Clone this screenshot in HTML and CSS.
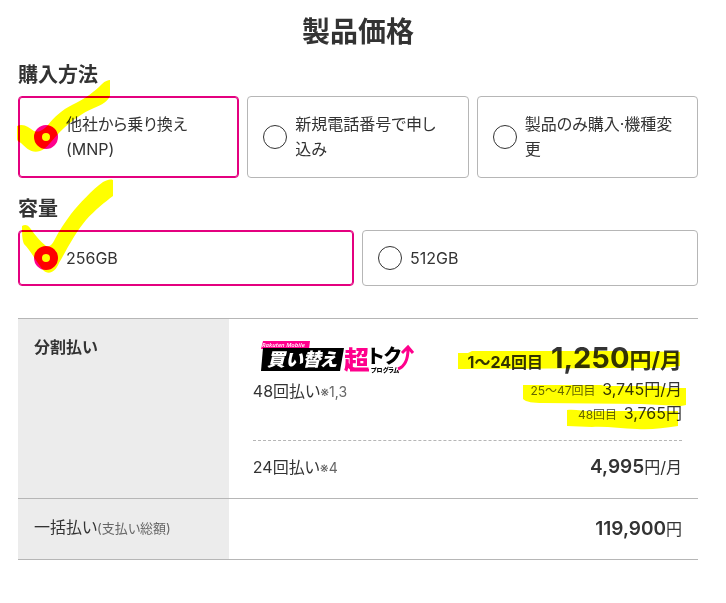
FILE: index.html
```html
<!DOCTYPE html>
<html lang="ja">
<head>
    <meta charset="UTF-8">
    <meta name="viewport" content="width=device-width, initial-scale=1.0">
    <title>製品価格</title>
    <link rel="stylesheet" href="styles.css">
</head>
<body>
    <main class="price">
        <h1 class="price-title">製品価格</h1>

        <h2 class="section-title" id="method-title">購入方法</h2>
        <div class="options options-method" role="radiogroup" aria-labelledby="method-title">
            <label class="option">
                <input type="radio" name="method" value="mnp" checked>
                <span>他社から乗り換え(MNP)</span>
                <svg class="marker marker-method" width="98" height="76" viewBox="0 0 98 76" aria-hidden="true">
                    <path d="M1 47C8 44 13 49 18 52C24 54 28 50 32 46C38 38 46 31 56 26C70 19 78 13 86 5C89 2 92 1 94 1V17C92 22 86 26 78 29C66 34 57 41 48 49C38 58 30 71 24 72C16 75 10 69 5 64C2 63 1 61 1 60Z"/>
                </svg>
            </label>
            <label class="option">
                <input type="radio" name="method" value="new">
                <span>新規電話番号で申し込み</span>
            </label>
            <label class="option">
                <input type="radio" name="method" value="device">
                <span>製品のみ購入·機種変更</span>
            </label>
        </div>

        <h2 class="section-title" id="storage-title">容量</h2>
        <div class="options options-storage" role="radiogroup" aria-labelledby="storage-title">
            <label class="option">
                <input type="radio" name="storage" value="256" checked>
                <span>256GB</span>
                <svg class="marker marker-storage" width="94" height="96" viewBox="0 0 94 96" aria-hidden="true">
                    <path d="M1 47C4 45 7 46 9 49C14 56 20 63 25 67C29 68 31 66 34 60C38 52 44 43 50 35C58 25 72 10 82 3C86 1 89 0 92 1V17C84 23 74 31 65 41C54 54 45 72 38 84C34 94 27 96 22 91C14 81 10 72 3 65C1 61 1 53 1 47Z"/>
                </svg>
            </label>
            <label class="option">
                <input type="radio" name="storage" value="512">
                <span>512GB</span>
            </label>
        </div>

        <table class="payment">
            <tr>
                <th scope="row"><strong>分割払い</strong></th>
                <td>
                    <div class="plan plan-48">
                        <div class="plan-name">
                            <svg class="program-logo" width="162" height="36" viewBox="0 0 162 36" role="img" aria-label="Rakuten Mobile 買い替え超トクプログラム">
                                <path class="logo-pink" d="M10 2H57L56 10H8Z"/>
                                <path d="M10 9H91L87 32H8Z"/>
                                <text class="logo-brand" x="9" y="8">Rakuten Mobile</text>
                                <text class="logo-main" x="14" y="27">買い替え</text>
                                <text class="logo-super" x="91" y="30">超</text>
                                <text class="logo-toku" x="115" y="24">トク</text>
                                <path class="logo-arrow" d="M97 31H116M145 30C153 27 155 18 155 10M149 14L155 8L160 14"/>
                                <text class="logo-program" x="118" y="33">プログラム</text>
                            </svg>
                            <div>48回払い<small>※1,3</small></div>
                        </div>
                        <div class="plan-price">
                            <div class="price-main">
                                <span>1〜24回目</span> <b>1,250</b><span class="unit">円/月</span>
                                <svg class="marker marker-first" width="222" height="20" viewBox="0 0 222 20" aria-hidden="true">
                                    <path d="M0 2L10 2L14 0H168L222 1V15C205 18 190 17 172 17L0 18Z"/>
                                </svg>
                            </div>
                            <div class="price-sub">
                                <small>25〜47回目</small> 3,745円/月
                                <svg class="marker marker-second" width="164" height="22" viewBox="0 0 164 22" aria-hidden="true">
                                    <path d="M0 0H78L82 1H138L142 3H163V20L158 21L118 19L20 18C10 18 3 17 0 14Z"/>
                                </svg>
                            </div>
                            <div class="price-sub">
                                <small>48回目</small> 3,765円
                                <svg class="marker marker-third" width="112" height="22" viewBox="0 0 112 22" aria-hidden="true">
                                    <path d="M0 1C10 0 18 3 30 2H111V17C96 19 84 21 70 20C54 20 40 17 25 18L0 17Z"/>
                                </svg>
                            </div>
                        </div>
                    </div>
                    <div class="plan plan-24">
                        <div>24回払い<small>※4</small></div>
                        <div><b>4,995</b>円/月</div>
                    </div>
                </td>
            </tr>
            <tr>
                <th scope="row">一括払い<small>(支払い総額)</small></th>
                <td class="total"><b>119,900</b>円</td>
            </tr>
        </table>
    </main>
</body>
</html>
```
FILE: styles.css
```css
* {
    box-sizing: border-box;
}
body {
    margin: 0;
    font-family: Inter, "Noto Sans CJK JP", sans-serif;
    font-size: 16px;
    line-height: 25px;
    font-feature-settings: "palt";
    color: #333;
    background-color: #fff;
}
.price {
    padding: 12px 28px 40px 18px;
}
.price-title {
    margin: 0 0 10px;
    font-size: 28px;
    line-height: 40px;
    text-align: center;
}
.section-title {
    margin: 0 0 8px;
    font-size: 20px;
    line-height: 26px;
}
.options {
    display: grid;
    gap: 8px;
}
.options-method {
    grid-template-columns: repeat(3, 1fr);
    margin-bottom: 18px;
}
.options-storage {
    grid-template-columns: repeat(2, 1fr);
    margin-bottom: 32px;
}
.option {
    position: relative;
    display: flex;
    align-items: center;
    gap: 8px;
    min-height: 56px;
    padding: 14px 20px 14px 15px;
    border: 1px solid #b6b6b6;
    border-radius: 4px;
    cursor: pointer;
}
.options-method .option {
    min-height: 82px;
}
.option:has(input:checked) {
    border-color: #e4007f;
    box-shadow: inset 0 0 0 1px #e4007f;
}
.option input {
    appearance: none;
    flex: none;
    width: 24px;
    height: 24px;
    margin: 0;
    border: 1px solid #333;
    border-radius: 50%;
    background-color: #fff;
}
.option input:checked {
    border: 8px solid #ff008c;
}

/* highlighter strokes */
.marker {
    position: absolute;
    fill: #ff0;
    mix-blend-mode: multiply;
    pointer-events: none;
}
.marker-method {
    top: -18px;
    left: -3px;
}
.marker-storage {
    top: -52px;
    left: 2px;
}
.marker-first {
    top: 16px;
    right: 2px;
}
.marker-second {
    top: 8px;
    right: -5px;
}
.marker-third {
    top: 8px;
    right: 3px;
}

.payment {
    width: 100%;
    border-collapse: collapse;
    table-layout: fixed;
}
.payment tr {
    border-top: 1px solid #b6b6b6;
    border-bottom: 1px solid #b6b6b6;
}
.payment th {
    width: 31%;
    padding: 16px;
    background-color: #ececec;
    font-weight: normal;
    text-align: left;
    vertical-align: top;
}
.payment td {
    padding: 16px 16px 16px 24px;
}
.payment small {
    font-size: 13px;
    line-height: 1;
    color: #666;
}
.payment .plan-name small,
.payment .plan-24 small {
    font-size: 14px;
}
.payment b {
    font-size: 19px;
    font-weight: 600;
    line-height: 1;
}
.payment .total {
    padding: 18px 16px 17px;
    text-align: right;
}
.plan {
    display: flex;
    justify-content: space-between;
}
.plan-48 {
    padding-bottom: 15px;
    border-bottom: 1px dashed #b6b6b6;
}
.plan-24 {
    padding: 14px 0 2px;
}
.plan-price {
    text-align: right;
    white-space: nowrap;
}
.price-main,
.price-sub {
    position: relative;
}
.price-main {
    height: 42px;
    padding-top: 8px;
    line-height: 36px;
    font-weight: bold;
}
.payment .price-main b {
    margin-left: 4px;
    font-size: 29px;
    font-weight: 700;
    line-height: 1;
}
.price-main .unit {
    font-size: 22px;
    line-height: 1;
}
.price-sub {
    height: 24px;
    line-height: 24px;
}
.payment .price-sub small {
    margin-right: 2px;
    font-size: 12px;
}

.program-logo {
    display: block;
    margin: 4px 0;
    font-family: "Noto Sans CJK JP", sans-serif;
    font-weight: 900;
}
.logo-pink,
.logo-super {
    fill: #ff008c;
}
.logo-brand {
    font-family: "Open Sans", sans-serif;
    font-size: 6px;
    font-style: italic;
    font-weight: 600;
    fill: #fff;
}
.logo-main {
    font-size: 18px;
    font-style: italic;
    fill: #fff;
}
.logo-super {
    font-size: 25px;
}
.logo-toku {
    font-size: 19px;
}
.logo-program {
    font-size: 6px;
}
.logo-arrow {
    fill: none;
    stroke: #ff008c;
    stroke-width: 3;
}
```
